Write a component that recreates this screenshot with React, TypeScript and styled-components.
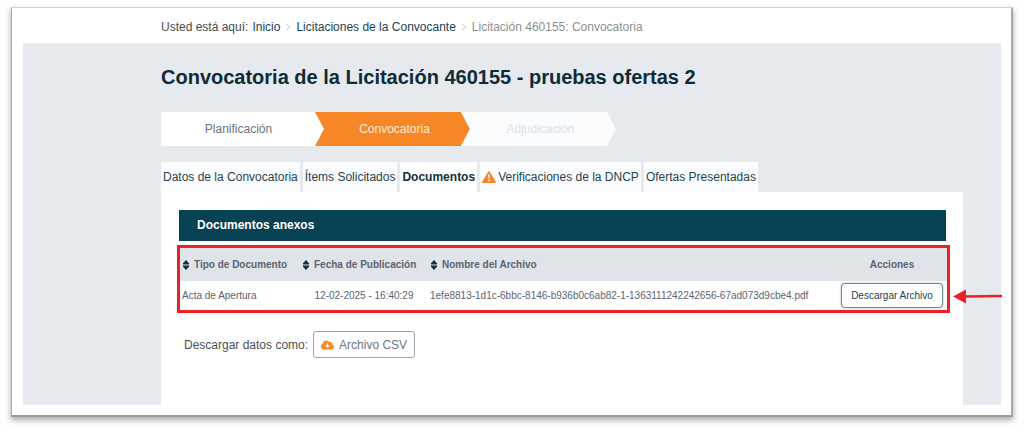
import React from "react";
import styled, { createGlobalStyle, css } from "styled-components";

const GlobalStyle = createGlobalStyle`
  *, *::before, *::after { box-sizing: border-box; }
  body {
    margin: 0;
    background: #fefefe;
    font-family: "Liberation Sans", Arial, Helvetica, sans-serif;
    font-size: 12px;
    line-height: 16px;
    color: #4a4f55;
  }
  button { font: inherit; cursor: pointer; }
  a { color: inherit; text-decoration: none; }
`;

const Frame = styled.div`
  margin: 7px 11px 13px 11px;
  padding: 0 10px 10px 11px;
  background: #fff;
  border: 1px solid #d4d4d4;
  border-left: 1px solid #a8a8a8;
  border-right: 2px solid #a8a8a8;
  border-bottom: 2px solid #9c9c9c;
  box-shadow: 0 3px 6px rgba(0, 0, 0, 0.35);
`;

const Breadcrumb = styled.nav`
  padding: 11px 0 8px 138px;
`;

const Crumbs = styled.ol`
  display: flex;
  align-items: center;
  gap: 4px;
  margin: 0;
  padding: 0;
  list-style: none;
  white-space: nowrap;
`;

const Crumb = styled.li<{ $muted?: boolean }>`
  display: flex;
  align-items: center;
  gap: 4px;
  color: ${(p) => (p.$muted ? "#8b8f92" : "#1d4250")};
`;

const CrumbLead = styled.li`
  color: #4c4c4c;
`;

const Divider = styled.svg`
  display: block;
  width: 8px;
  height: 8px;
`;

const Main = styled.main`
  padding: 20px 38px 0 138px;
  background: #e6e9ee;
`;

const Title = styled.h1`
  margin: 0 0 21px;
  color: #0e2b3a;
  font-size: 20px;
  line-height: 28px;
  font-weight: 700;
`;

const Steps = styled.ol`
  display: flex;
  margin: 0 0 16px;
  padding: 0;
  list-style: none;
`;

const Step = styled.li<{ $state: "done" | "current" | "next" }>`
  width: 155px;
  height: 34px;
  margin-right: -9px;
  padding-left: 4px;
  line-height: 34px;
  text-align: center;
  clip-path: polygon(0 0, calc(100% - 9px) 0, 100% 50%, calc(100% - 9px) 100%, 0 100%, 9px 50%);
  &:first-child {
    width: 163px;
    padding: 0 8px 0 0;
    clip-path: polygon(0 0, calc(100% - 9px) 0, 100% 50%, calc(100% - 9px) 100%, 0 100%);
  }
  ${(p) =>
    p.$state === "done" &&
    css`
      background: #fff;
      color: #6a7383;
    `}
  ${(p) =>
    p.$state === "current" &&
    css`
      background: #f78626;
      color: #fdeedd;
    `}
  ${(p) =>
    p.$state === "next" &&
    css`
      background: #fafcfe;
      color: #dde1e8;
    `}
`;

const Tabs = styled.div`
  display: flex;
  gap: 3px;
`;

const Tab = styled.button<{ $active?: boolean }>`
  display: flex;
  align-items: center;
  gap: 2px;
  height: 30px;
  padding: 0 2px;
  border: 0;
  white-space: nowrap;
  background: ${(p) => (p.$active ? "#fff" : "#fafcfe")};
  color: ${(p) => (p.$active ? "#132f3b" : "#27434f")};
  font-weight: ${(p) => (p.$active ? 700 : 400)};
`;

const Panel = styled.section`
  padding: 18px 13px 47px 16px;
  background: #fff;
`;

const PanelTitle = styled.h2`
  margin: 0 4px 4px 2px;
  padding: 0 18px;
  background: #074154;
  color: #fff;
  font-size: 12px;
  line-height: 31px;
  font-weight: 700;
`;

const Highlight = styled.div`
  position: relative;
  border: 3px solid #ea2227;
`;

const Table = styled.table`
  width: 100%;
  border-collapse: collapse;
  table-layout: fixed;
  font-size: 10px;
  color: #5b6371;
`;

const Col = styled.col<{ $width?: number }>`
  width: ${(p) => (p.$width ? `${p.$width}px` : "auto")};
`;

const Th = styled.th<{ $center?: boolean }>`
  height: 33px;
  padding: 0 3px;
  background: #e0e3e8;
  text-align: ${(p) => (p.$center ? "center" : "left")};
  white-space: nowrap;
`;

const SortButton = styled.button`
  display: flex;
  align-items: center;
  gap: 5px;
  padding: 0;
  border: 0;
  background: none;
  color: inherit;
  font-weight: 700;
`;

const Td = styled.td<{ $center?: boolean }>`
  height: 29px;
  padding: 0 2px;
  text-align: ${(p) => (p.$center ? "center" : "left")};
  white-space: nowrap;
`;

const DownloadButton = styled.button`
  width: 102px;
  height: 25px;
  padding: 0;
  border: 1px solid #6f8b93;
  border-radius: 4px;
  background: #fff;
  box-shadow: 0 0 2px rgba(60, 90, 100, 0.5);
  color: #1f4350;
  vertical-align: middle;
`;

const Arrow = styled.svg`
  position: absolute;
  left: calc(100% + 6px);
  top: 40px;
  width: 49px;
  height: 16px;
`;

const Export = styled.div`
  display: flex;
  align-items: center;
  gap: 5px;
  margin-top: 18px;
  padding-left: 7px;
`;

const CsvButton = styled.button`
  display: flex;
  align-items: center;
  gap: 5px;
  height: 27px;
  padding: 0 7px;
  border: 1px solid #9da4b0;
  border-radius: 3px;
  background: #fff;
  color: #6a7383;
`;

const Chevron = () => (
  <Divider viewBox="0 0 8 8" aria-hidden="true">
    <path d="M2.5 1 L5.5 4 L2.5 7" fill="none" stroke="#c0c4c8" strokeWidth="1" />
  </Divider>
);

const SortIcon = () => (
  <svg width="6" height="10" viewBox="0 0 6 10" aria-hidden="true">
    <path d="M3 0 L6 3.2 V4.600 H0 V3.2 Z M3 10 L6 6.800 V5.400 H0 V6.800 Z" fill="#12313f" />
  </svg>
);

const WarningIcon = () => (
  <svg width="14" height="12" viewBox="0 0 14 12" aria-hidden="true">
    <path d="M7 0.8 L13.2 11.2 H0.8 Z" fill="#f78626" stroke="#f78626" strokeWidth="1.4" strokeLinejoin="round" />
    <path d="M6.2 3.6 H7.8 L7.5 7.6 H6.5 Z M6.2 8.6 H7.8 V10.2 H6.2 Z" fill="#fff" />
  </svg>
);

const CloudIcon = () => (
  <svg width="13" height="10" viewBox="0 32 640 448" aria-hidden="true">
    <path
      fill="#f78626"
      d="M537.6 226.6c4.1-10.7 6.4-22.4 6.4-34.6 0-53-43-96-96-96-19.7 0-38.1 6-53.3 16.2C367 64.2 315.3 32 256 32c-88.4 0-160 71.6-160 160 0 2.7.1 5.4.2 8.1C40.2 219.8 0 273.2 0 336c0 79.5 64.5 144 144 144h368c70.7 0 128-57.3 128-128 0-61.9-44-113.6-102.4-125.4z"
    />
    <path fill="#fff" d="M288 170 h64 v110 h80 L320 400 L208 280 h80 Z" />
  </svg>
);

const columns = ["Tipo de Documento", "Fecha de Publicación", "Nombre del Archivo"];

const documents = [
  {
    type: "Acta de Apertura",
    date: "12-02-2025 - 16:40:29",
    file: "1efe8813-1d1c-6bbc-8146-b936b0c6ab82-1-1363111242242656-67ad073d9cbe4.pdf",
  },
];

export default function App() {
  return (
    <>
      <GlobalStyle />
      <Frame>
        <Breadcrumb aria-label="Ruta de navegación">
          <Crumbs>
            <CrumbLead>Usted está aquí:</CrumbLead>
            <Crumb><a href="#inicio">Inicio</a><Chevron /></Crumb>
            <Crumb><a href="#licitaciones">Licitaciones de la Convocante</a><Chevron /></Crumb>
            <Crumb $muted>Licitación 460155: Convocatoria</Crumb>
          </Crumbs>
        </Breadcrumb>
        <Main>
          <Title>Convocatoria de la Licitación 460155 - pruebas ofertas 2</Title>
          <Steps>
            <Step $state="done">Planificación</Step>
            <Step $state="current">Convocatoria</Step>
            <Step $state="next">Adjudicación</Step>
          </Steps>
          <Tabs role="tablist">
            <Tab role="tab">Datos de la Convocatoria</Tab>
            <Tab role="tab">Ítems Solicitados</Tab>
            <Tab role="tab" aria-selected="true" $active>Documentos</Tab>
            <Tab role="tab"><WarningIcon />Verificaciones de la DNCP</Tab>
            <Tab role="tab">Ofertas Presentadas</Tab>
          </Tabs>
          <Panel>
            <PanelTitle>Documentos anexos</PanelTitle>
            <Highlight>
              <Table>
                <colgroup>
                  <Col $width={120} />
                  <Col $width={128} />
                  <Col />
                  <Col $width={110} />
                </colgroup>
                <thead>
                  <tr>
                    {columns.map((name) => (
                      <Th key={name} scope="col">
                        <SortButton><SortIcon />{name}</SortButton>
                      </Th>
                    ))}
                    <Th scope="col" $center>Acciones</Th>
                  </tr>
                </thead>
                <tbody>
                  {documents.map((doc) => (
                    <tr key={doc.file}>
                      <Td>{doc.type}</Td>
                      <Td $center>{doc.date}</Td>
                      <Td>{doc.file}</Td>
                      <Td $center><DownloadButton>Descargar Archivo</DownloadButton></Td>
                    </tr>
                  ))}
                </tbody>
              </Table>
              <Arrow viewBox="0 0 49 16" aria-hidden="true">
                <path d="M12 8.5 L49 8" stroke="#ea2227" strokeWidth="2.4" fill="none" />
                <path d="M0 8.5 L13 1.5 V15.5 Z" fill="#ea2227" />
              </Arrow>
            </Highlight>
            <Export>
              <span>Descargar datos como:</span>
              <CsvButton><CloudIcon />Archivo CSV</CsvButton>
            </Export>
          </Panel>
        </Main>
      </Frame>
    </>
  );
}
